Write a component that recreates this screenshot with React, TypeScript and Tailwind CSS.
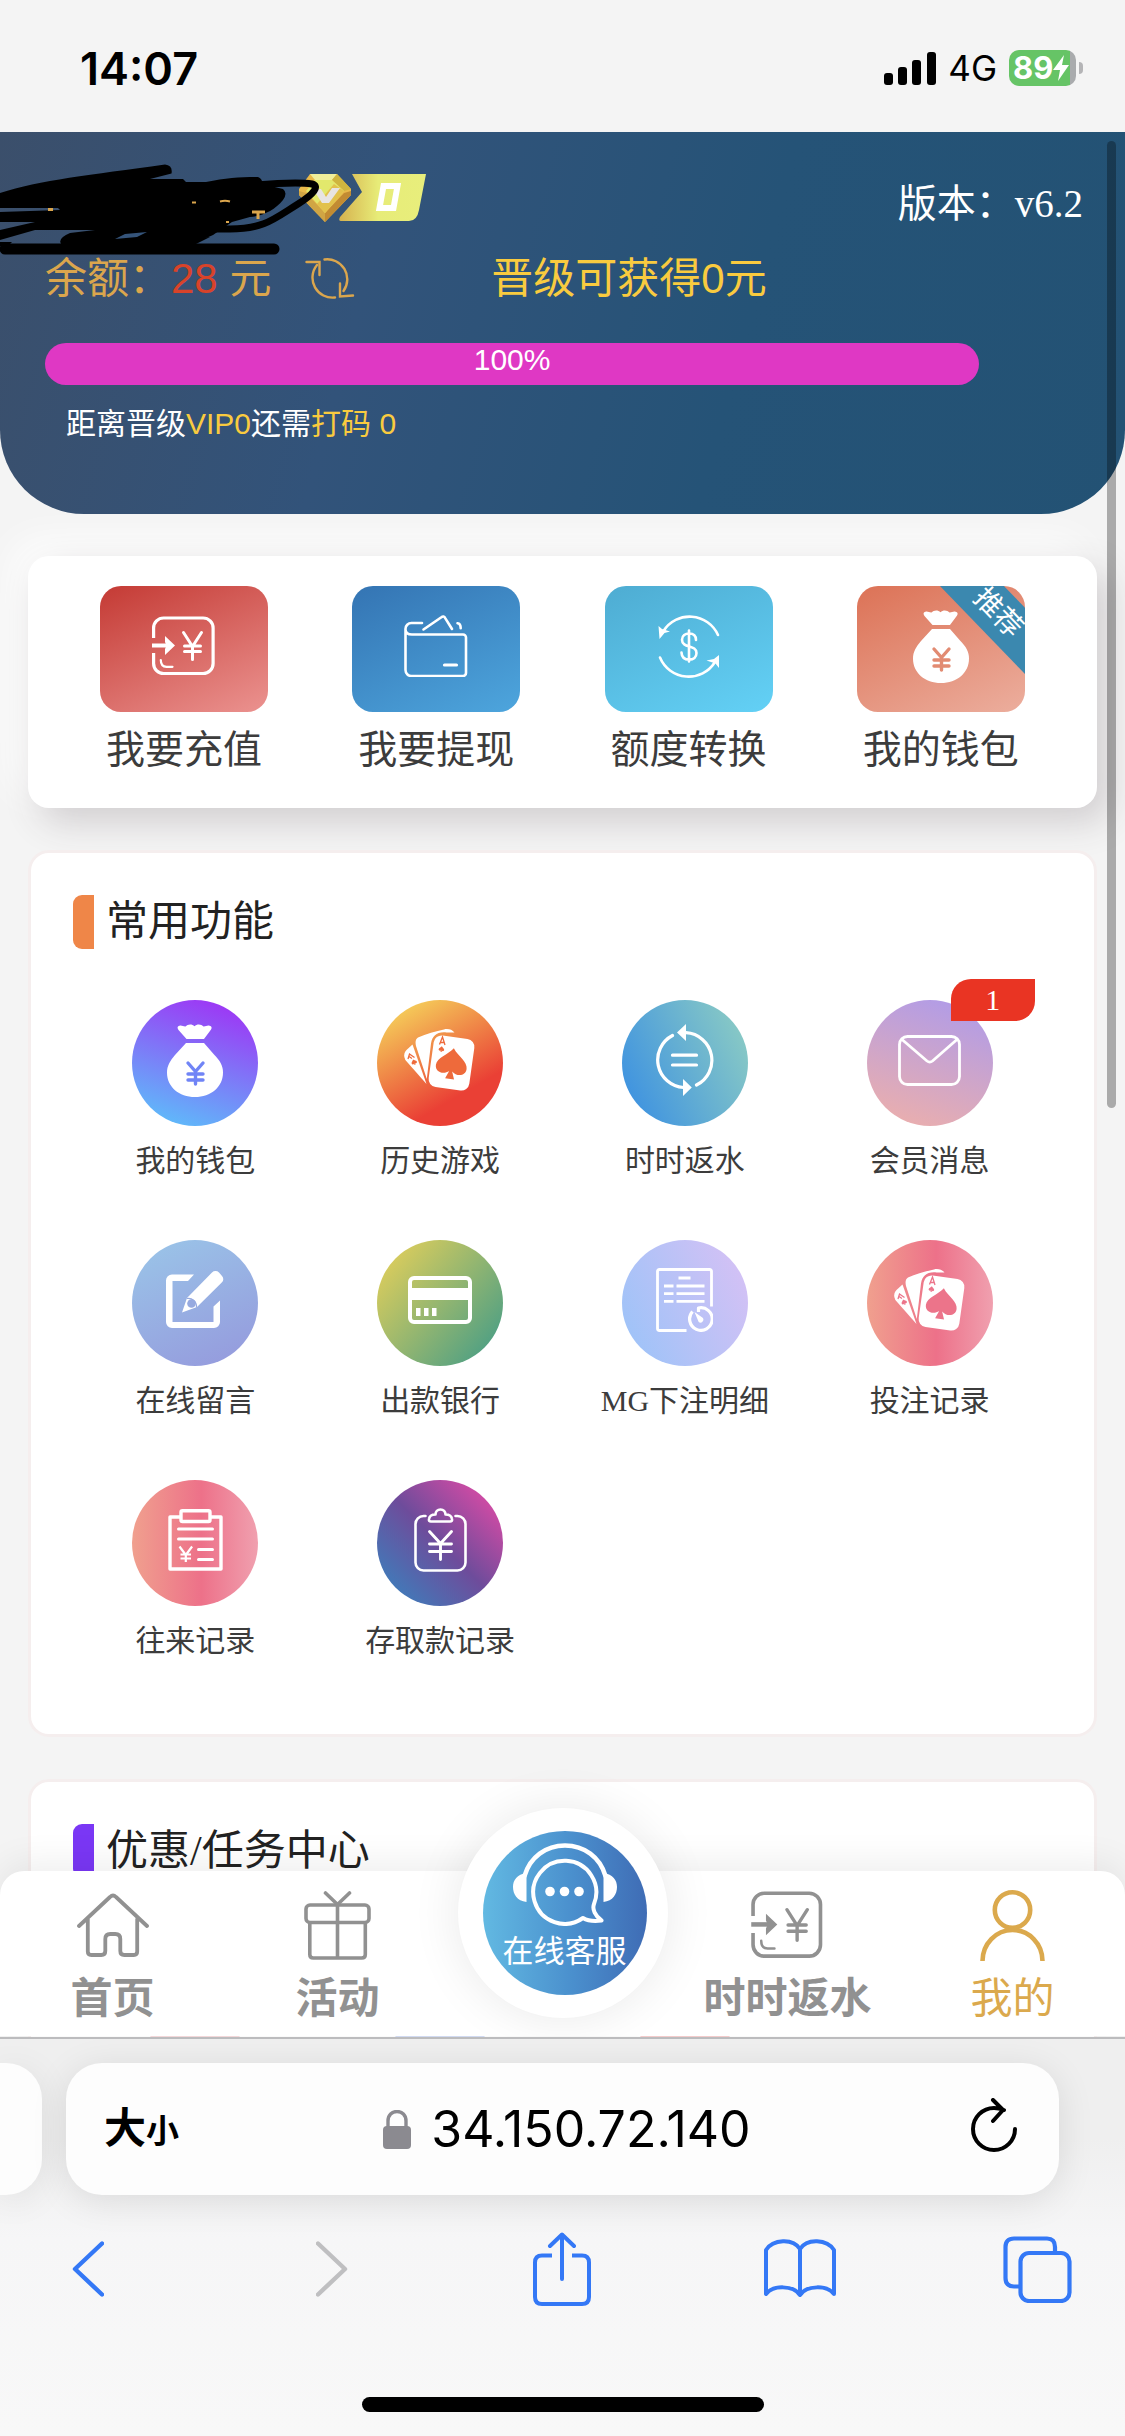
import React from "react";

type IconProps = { className?: string; cut?: string };

const line = {
  fill: "none",
  stroke: "currentColor",
  strokeLinecap: "round" as const,
  strokeLinejoin: "round" as const,
};

/* ---------- service icons ---------- */

function RechargeIcon({ className }: IconProps) {
  return (
    <svg viewBox="0 0 64 60" className={className} aria-hidden="true" {...line}>
      <path strokeWidth="3.2" strokeLinecap="butt" d="M1.6 22V12a10 10 0 0 1 10-10h39.500a10 10 0 0 1 10 10v35.500a10 10 0 0 1-10 10H11.600a10 10 0 0 1-10-10V37" />
      <path strokeWidth="4" strokeLinecap="butt" d="M0 29.500h16" />
      <path fill="currentColor" stroke="none" d="M13 20l10 9.500L13 39v-6l1.500-3.500L13 26z" />
      <path strokeWidth="3" d="M31.500 16.500l9 14 9-14M40.500 30.500v13M32.500 30h16M32.500 35.500h16" />
      <path strokeWidth="2.200" d="M8.800 44c0 4.500 2.200 6.800 5.700 6.800h6" />
    </svg>
  );
}

function WalletIcon({ className }: IconProps) {
  return (
    <svg viewBox="0 0 64 62" className={className} aria-hidden="true" strokeWidth="2.600" {...line}>
      <path d="M18 8H8a6 6 0 0 0-6.500 6.500c0 3.200 2.500 5 6.500 5h51a3 3 0 0 1 3 3v35.500a3 3 0 0 1-3 3H8a6 6 0 0 1-6.500-6V14.500" />
      <path d="M19.500 14.500L37 2.500c2-1.500 3.400-1.200 4.200.600L48 14M53.500 8.200c2.500.3 3.200 2 3.200 5" />
      <path strokeWidth="3.200" d="M40.500 50h12" />
    </svg>
  );
}

function TransferIcon({ className }: IconProps) {
  return (
    <svg viewBox="0 0 62 65" className={className} aria-hidden="true" strokeWidth="2.600" {...line}>
      <path d="M60 21A31 31 0 0 0 5.500 17M2 43.500A31 31 0 0 0 57 48" />
      <path fill="currentColor" stroke="none" d="M.500 12l3.500 3 8 2.600-5.500 1.400-5 6zM61 41v13l-3.500-4.500-9-3 7.500-1.500z" />
      <path d="M38 26c0-5-3.500-6.500-7-6.500s-7 2.200-7 6.200c0 9 14.500 4.600 14.500 13.300 0 4.300-3 6.600-7.300 6.600-4.500 0-7.500-2.500-7.700-7M31 16.500v31" />
    </svg>
  );
}

function MoneyBagIcon({ className, cut }: IconProps) {
  return (
    <svg viewBox="0 0 56 73" className={className} aria-hidden="true">
      <path fill="currentColor" d="M12.500 1.700c2.500-.5 4 1 6 .8C20.500 0 25-.5 27.500 2.200 30-.5 34.500 0 36.500 2.500c2 .2 3.500-1.300 6-.8 2.300.500 2.600 2 1.400 4L37 15H19.500L11.500 6c-1.400-2-1.300-3.800 1-4.300zM19 19h18l10 11.500c6 6 9 11.500 9 18C56 63 44 73 28 73S0 63 0 48.500C0 42 3 37 8 31z" />
      <path d="M21 39l7.500 8.500L36 39M28.500 47.500V60M21 50h15M21 56h15" fill="none" stroke={cut} strokeWidth="3.400" strokeLinecap="round" />
    </svg>
  );
}

function CardsIcon({ className, cut }: IconProps) {
  return (
    <svg viewBox="0 0 72 63" className={className} aria-hidden="true" fill="currentColor">
      <path d="M8.500 15.500L22.500 55 1.800 31.500C-.8 27 0 24 2.500 21z" />
      <path d="M14 8.500C22 5 32 2 40 .400c4-.9 8 0 10.500 3.100h-8C33 2.500 28.500 6.500 27 14.500L22.800 50 12 17c-.9-4-.5-7 2-8.500z" />
      <rect x="-20.500" y="-26" width="41" height="52" rx="8" transform="translate(47.500 34) rotate(8)" />
      <g fill={cut}>
        <path transform="translate(47.800 34) rotate(8)" d="M0-15C5-7.500 15.500-4 15.500 4c0 7.500-9 9-14 4.300L4.500 16h-9l3-7.700C-6.500 13-15.500 11.500-15.500 4c0-8 10.500-11.500 15.500-19z" />
        <path transform="translate(37.500 20) rotate(8) scale(.18)" d="M0-15C5-7.500 15.500-4 15.500 4c0 7.500-9 9-14 4.300L4.500 16h-9l3-7.700C-6.500 13-15.500 11.500-15.500 4c0-8 10.500-11.500 15.500-19z" />
        <path transform="translate(10 33) rotate(-22) scale(.18)" d="M0-15C5-7.500 15.500-4 15.500 4c0 7.500-9 9-14 4.300L4.500 16h-9l3-7.700C-6.500 13-15.500 11.500-15.500 4c0-8 10.500-11.500 15.500-19z" />
      </g>
      <g fill="none" stroke={cut} strokeWidth="1.300">
        <path d="M35.500 15.500l3-7.500 2.500 8M36.500 13.500h4" />
        <path d="M4 30l1.500-5 5 3.500M5 27.500l3 2" />
      </g>
    </svg>
  );
}

function RebateIcon({ className }: IconProps) {
  return (
    <svg viewBox="0 0 59 72" className={className} aria-hidden="true" strokeWidth="3.200" {...line}>
      <path d="M31 8.700A27.600 27.600 0 0 1 41.500 61M17.500 11.500A27.600 27.600 0 0 0 28.500 63.500" />
      <path d="M17.500 31.200h24M17.500 41h24" />
      <path fill="currentColor" stroke="none" d="M22 8.500L31 0v17zM36.800 63.500L28 55v17z" />
    </svg>
  );
}

function MailIcon({ className }: IconProps) {
  return (
    <svg viewBox="0 0 63 51" className={className} aria-hidden="true" strokeWidth="2.800" {...line}>
      <rect x="1.500" y="1.500" width="60" height="48" rx="8" />
      <path d="M4 4.500l25 21.500c2 1.600 3.500 1.600 5.500 0L59 4.500" />
    </svg>
  );
}

function EditIcon({ className, cut }: IconProps) {
  return (
    <svg viewBox="0 0 58 58" className={className} aria-hidden="true" fill="currentColor">
      <path d="M28 3.500H6a6 6 0 0 0-6 6V51a6 6 0 0 0 6 6h42a6 6 0 0 0 6-6V29.500l-6.500 6V51h-41V10H22z" />
      <path d="M46 1.500a5 5 0 0 1 7 0l3 3.500a4.500 4.500 0 0 1 0 6.300L31 36l-15 5.500 5-14.500z" />
      <path fill="none" stroke={cut} strokeWidth="1.200" d="M21 27.500c5-1 10 3.500 9.500 9" />
      <circle cx="25.500" cy="32.500" r="4.300" fill={cut} />
    </svg>
  );
}

function BankCardIcon({ className }: IconProps) {
  return (
    <svg viewBox="0 0 64 48" className={className} aria-hidden="true">
      <rect x="2" y="2" width="60" height="44" rx="4" fill="none" stroke="currentColor" strokeWidth="4" />
      <path fill="currentColor" d="M2 12h60v12H2zM8 32h4.500v8H8zM16 32h4.500v8H16zM24 32h4.500v8H24z" />
    </svg>
  );
}

function BetDetailIcon({ className }: IconProps) {
  return (
    <svg viewBox="0 0 57 64" className={className} aria-hidden="true" strokeWidth="2.800" {...line}>
      <path strokeLinecap="butt" d="M55.500 38.500V3.500q0-2-2-2h-50q-2 0-2 2v57q0 2 2 2H30.500" />
      <path strokeLinecap="butt" d="M22.500 10H34.500M8 18h9.500M20.500 18h28M8 25.700h9.500M20.500 25.700h28M8 33.400h9.500M20.500 33.400h28" />
      <path strokeLinecap="butt" strokeWidth="3.200" d="M42.500 44v-4a11.300 11.300 0 1 1-6 3.500" />
      <path fill="currentColor" stroke="none" d="M38.500 44l8.500 6a3 3 0 0 1-4.300 4z" />
    </svg>
  );
}

function LedgerIcon({ className }: IconProps) {
  return (
    <svg viewBox="0 0 55 62" className={className} aria-hidden="true" strokeWidth="3.400" {...line}>
      <path d="M12 8H2v52h51V8H43" />
      <rect x="13" y="1.800" width="29" height="10.700" rx="1.500" />
      <path d="M10.500 20h34M10.500 30h34M30.500 40.500h14M30.500 50.500h14" strokeWidth="3" />
      <path d="M11.500 37.500l6.300 8.500 6.300-8.500M17.800 46v7M12.500 45.500h10.500M12.500 49.500h10.500" strokeWidth="2.200" strokeLinecap="butt" />
    </svg>
  );
}

function DepositLogIcon({ className }: IconProps) {
  return (
    <svg viewBox="0 0 53 64" className={className} aria-hidden="true" strokeWidth="2.600" {...line}>
      <path d="M11.500 8H9.500a8 8 0 0 0-8 8v38.500a8 8 0 0 0 8 8h34a8 8 0 0 0 8-8V16a8 8 0 0 0-8-8h-2" />
      <path d="M17 13.500h19q2.500 0 2-2.500c-.5-4-3-4.500-6.500-4.500C31.500 3.500 29.500 1.500 26.500 1.500s-5 2-5 5c-3.500 0-6 .5-6.500 4.500q-.5 2.500 2 2.500z" />
      <path strokeWidth="2.900" d="M15.500 23.500l11 12 11-12M26.500 35.500v16M15.500 36h22M15.500 43.500h22" />
    </svg>
  );
}

/* ---------- tab bar icons ---------- */

function HomeIcon({ className }: IconProps) {
  return (
    <svg viewBox="0 0 72 64" className={className} aria-hidden="true" strokeWidth="3.800" {...line}>
      <path d="M2 33L33 4c2-2 4-2 6 0l31 29M10.800 26v32.500q0 3.500 3.500 3.500h10q4 0 4-4V46q0-5 5-5h5q5 0 5 5v12q0 4 4 4h9.500q3.400 0 3.400-3.500V26" />
    </svg>
  );
}

function GiftIcon({ className }: IconProps) {
  return (
    <svg viewBox="0 0 67 69" className={className} aria-hidden="true" strokeWidth="3.600" {...line}>
      <rect x="2" y="14" width="63" height="17.500" rx="4" />
      <path d="M5.800 32v31.500q0 3.500 3.500 3.500h48.500q3.500 0 3.500-3.500V32M33.500 14v52M33.500 13.500L21.500 2M33.500 13.500L45.500 2" />
    </svg>
  );
}

function UserIcon({ className }: IconProps) {
  return (
    <svg viewBox="0 0 65 71" className={className} aria-hidden="true" strokeWidth="4.600" fill="none" stroke="currentColor">
      <circle cx="32.500" cy="20" r="17.700" />
      <path d="M2.500 71a30 31 0 0 1 60 0" />
    </svg>
  );
}

function HeadsetIcon({ className }: IconProps) {
  return (
    <svg viewBox="0 0 104 84" className={className} aria-hidden="true" strokeWidth="4.500" {...line}>
      <path d="M11.500 34C17 15 33 3.500 52 3.500S87 15 92.500 34" />
      <path fill="currentColor" stroke="none" d="M13.500 31v29C4 59 0 52 0 45s4-12.500 13.500-14zM90.500 31v29C100 59 104 52 104 45s-4-12.500-13.500-14z" />
      <path strokeWidth="4" d="M70 76a31.500 31.500 0 1 1 11-14c-2 5 1 12 7.500 16.500-6 .8-13.500.5-18.500-2.500z" />
      <g fill="currentColor" stroke="none">
        <circle cx="37" cy="49.500" r="4.800" />
        <circle cx="51.500" cy="49.500" r="4.800" />
        <circle cx="66" cy="49.500" r="4.800" />
      </g>
    </svg>
  );
}

/* ---------- header drawings ---------- */

function VipBadge() {
  return (
    <svg viewBox="0 0 130 50" className="h-[50px] w-[130px]" role="img" aria-label="VIP 0">
      <defs>
        <linearGradient id="plate" x1="0" x2="1">
          <stop offset="0" stopColor="#d6b24f" />
          <stop offset=".45" stopColor="#e7ec78" />
          <stop offset="1" stopColor="#e8ee7c" />
        </linearGradient>
      </defs>
      <path fill="#e9b94a" d="M12 1h27l14 15v6L27 49 1 22v-6z" />
      <path fill="#f0ee9a" d="M12 1h27l-5 6H17z" />
      <path fill="#cfb53f" d="M39 1l14 15-7 2-12-11z" />
      <path fill="#c28b32" d="M53 18v4L27 49v-9l19-20z" />
      <path fill="#d0a544" d="M1 18v4l26 27v-9L8 20z" />
      <path fill="#e2e86c" d="M17 7h17l12 11-19 22L8 18z" />
      <path fill="#e2b13f" d="M46 18L27 40l-8-9 17-20z" opacity=".7" />
      <path fill="#e8e4e2" d="M15 16h8l5 8 6-9h8L31 30h-7z" />
      <path fill="url(#plate)" d="M54 1h74l-7 36q-2 11-10 11H43q-3 0-1-4l22-25z" />
      <path fill="none" stroke="#fff" strokeWidth="6" d="M85.500 13h14l-4 22H81.500z" />
    </svg>
  );
}

function Scribble() {
  return (
    <svg viewBox="0 0 330 100" className="absolute left-0 top-[28px] h-[100px] w-[330px]" aria-hidden="true" strokeLinecap="round" strokeLinejoin="round">
      <path d="M0 33C40 20 90 15 165 4.500q8 1 6.500 9L150 19h33l3 3h20c20-4 34-5 52-5q5 2 4 7l21 5q5 4 0 11c-8 10-20 16-33 17l-18 5-19 13c-13 7-53 9-93 10H62q-6-6 8-12l25-3H35L0 80V70l35-8H0V52l60-2-2-2H0z" />
      <path fill="none" stroke="#000" strokeWidth="7" d="M255 25c25-2 45-3 57-1 8 2 2 10-14 20-24 15-34 25-68 25h-40" />
      <path fill="none" stroke="#000" strokeWidth="11" d="M5 89h269" />
      <path fill="#000" d="M0 82h12l-4 4H0zM110 83l100-6-20 10h-80z" />
      <g fill="none" stroke="#dba64d" strokeLinecap="butt">
        <path strokeWidth="3" d="M48 49.500h5M252 52h13M258 52v7" />
        <path strokeWidth="2" d="M192 42.500h4M220 41.500q5-1.500 10 0M226 62h3" />
      </g>
      <path fill="#35547a" d="M115 79l10-5 22-2-10 5z" />
    </svg>
  );
}

function RefreshIcon() {
  return (
    <svg viewBox="0 0 50 43" className="h-[43px] w-[50px]" aria-hidden="true" strokeWidth="2.400" {...line}>
      <path d="M19.500 1.500A20 20 0 0 1 38.500 33M30 39.500A20 20 0 0 1 12 7" />
      <path strokeLinejoin="miter" d="M1.500 4H14.500v13M35 25.500V38.500l13-1" />
    </svg>
  );
}

/* ---------- data ---------- */

const shortcuts = [
  { label: "我要充值", bg: "bg-[linear-gradient(155deg,#c43a34_0%,#e98e8b_95%)]", icon: <RechargeIcon className="h-[60px] w-[64px]" /> },
  { label: "我要提现", bg: "bg-[linear-gradient(155deg,#3474b3_0%,#4ca3db_95%)]", icon: <WalletIcon className="h-[62px] w-[64px]" /> },
  { label: "额度转换", bg: "bg-[linear-gradient(155deg,#4eacd2_0%,#62cff4_95%)]", icon: <TransferIcon className="h-[65px] w-[62px]" /> },
  { label: "我的钱包", bg: "bg-[linear-gradient(155deg,#dc7256_0%,#ebab9a_95%)]", icon: <MoneyBagIcon cut="#e28b72" className="h-[73px] w-[56px]" />, ribbon: "推荐" },
];

const features = [
  { label: "我的钱包", bg: "bg-[linear-gradient(200deg,#9b3bf5_12%,#5cc0fa_95%)]", icon: <MoneyBagIcon cut="#7084f6" className="h-[73px] w-[56px]" /> },
  { label: "历史游戏", bg: "bg-[linear-gradient(150deg,#f5cf5a_10%,#ea4035_72%)]", icon: <CardsIcon cut="#ee6a3b" className="h-[63px] w-[72px]" /> },
  { label: "时时返水", bg: "bg-[linear-gradient(65deg,#3f93e0_10%,#88c9c5_90%)]", icon: <RebateIcon className="h-[72px] w-[59px]" /> },
  { label: "会员消息", bg: "bg-[linear-gradient(200deg,#b29ce6_10%,#ecafac_95%)]", icon: <MailIcon className="h-[51px] w-[63px]" />, badge: 1 },
  { label: "在线留言", bg: "bg-[linear-gradient(155deg,#9ac4e8_5%,#959add_95%)]", icon: <EditIcon cut="#97aae0" className="h-[58px] w-[58px]" /> },
  { label: "出款银行", bg: "bg-[linear-gradient(130deg,#dccd5c_10%,#4d9f84_90%)]", icon: <BankCardIcon className="h-[48px] w-[64px]" /> },
  { label: "MG下注明细", bg: "bg-[linear-gradient(65deg,#9fc3f8_10%,#d3c1f5_90%)]", icon: <BetDetailIcon className="h-[64px] w-[57px]" /> },
  { label: "投注记录", bg: "bg-[linear-gradient(90deg,#f0a08e_0%,#ed7189_55%,#f0a0af_100%)]", icon: <CardsIcon cut="#ec748a" className="h-[63px] w-[72px]" /> },
  { label: "往来记录", bg: "bg-[linear-gradient(90deg,#f0a08e_0%,#ed7189_55%,#f0a0af_100%)]", icon: <LedgerIcon className="h-[62px] w-[55px]" /> },
  { label: "存取款记录", bg: "bg-[linear-gradient(45deg,#417ab9_12%,#6e4c9b_50%,#cb4ba4_85%)]", icon: <DepositLogIcon className="h-[64px] w-[53px]" /> },
];

const promoTints = ["bg-[#f8dcde]", "bg-[#d6dff6]", "bg-[#f8d0d0]"];

/* ---------- page parts ---------- */

function StatusBar() {
  return (
    <header className="flex h-[132px] shrink-0 items-center justify-between pb-2 pl-[80px] pr-[42px] pt-3 font-['Inter',sans-serif] text-black">
      <time className="text-[45px] font-semibold leading-none">14:07</time>
      <div className="flex items-center gap-[12px]">
        <svg viewBox="0 0 52 33" className="h-[33px] w-[52px]" role="img" aria-label="信号">
          <rect x="0" y="21" width="9" height="12" rx="3" />
          <rect x="14" y="15" width="9" height="18" rx="3" />
          <rect x="28" y="8" width="9" height="25" rx="3" />
          <rect x="43" y="0" width="9" height="33" rx="3" />
        </svg>
        <span className="text-[35px] leading-[42px]">4G</span>
        <div className="flex items-center gap-[3px]">
          <div className="flex h-[36px] w-[67px] items-center rounded-[10px] bg-[linear-gradient(90deg,#66c466_91%,#a9abad_91%)] pl-1 text-white">
            <span className="text-[31px] font-bold leading-[36px]">89</span>
            <svg viewBox="0 0 16 26" className="h-[26px] w-[16px] shrink-0" fill="currentColor" aria-hidden="true">
              <path d="M11 0L0 15h7L5 26 16 10H9z" />
            </svg>
          </div>
          <span className="h-3 w-1 rounded-r-full bg-[#b4b4b6]" />
        </div>
      </div>
    </header>
  );
}

function AccountPanel() {
  return (
    <section className="relative rounded-b-[84px] bg-[linear-gradient(105deg,#3b4f6b_0%,#32537a_33%,#255377_65%,#235274_100%)] pb-[68px] pl-[45px] pr-[42px] pt-[36px] font-['Liberation_Sans','Noto_Sans_CJK_SC',sans-serif]">
      <div className="flex h-[72px] items-center justify-between">
        <div className="ml-[253px] pb-3">
          <VipBadge />
        </div>
        <span className="font-['Liberation_Serif','Noto_Sans_CJK_SC',serif] text-[39px] leading-[58px] text-white">版本：v6.2</span>
      </div>
      <div className="flex h-[78px] items-center text-[42px] leading-[60px]">
        <div className="flex basis-[43%] items-center text-[#dba64d]">
          <span>余额：</span>
          <span className="text-[#d8432a]">28</span>
          <span>&nbsp;元</span>
          <button type="button" aria-label="刷新余额" className="ml-[34px]">
            <RefreshIcon />
          </button>
        </div>
        <span className="text-[#f9cb3f]">晋级可获得0元</span>
      </div>
      <div role="progressbar" aria-label="晋级进度" aria-valuenow={100} aria-valuemin={0} aria-valuemax={100} className="mt-[25px] h-[42px] w-[90%] rounded-full bg-[#df38c4] text-center text-[30px] leading-[34px] text-white">
        100%
      </div>
      <p className="mt-[16px] pl-[21px] text-[30px] leading-[45px] text-white">
        距离晋级<span className="text-[#f9cb3f]">VIP0</span>还需<span className="text-[#f9cb3f]">打码 0</span>
      </p>
      <Scribble />
    </section>
  );
}

function Shortcuts() {
  return (
    <nav aria-label="快捷操作" className="mx-[28px] mt-[42px] grid grid-cols-4 rounded-[21px] bg-white px-[30px] pb-[29px] pt-[30px] shadow-[12px_14px_36px_#d0cdcf,-14px_-14px_40px_#ffffff]">
      {shortcuts.map((s) => (
        <a key={s.label} href="#" className="flex flex-col items-center gap-[9px]">
          <span className={`relative flex h-[126px] w-[168px] items-center justify-center overflow-hidden rounded-[21px] pb-[6px] text-white ${s.bg}`}>
            {s.icon}
            {s.ribbon && (
              <span className="absolute right-[-53px] top-[4px] w-[160px] rotate-[46deg] bg-[#3b88af] text-center text-[28px] leading-[46px]">{s.ribbon}</span>
            )}
          </span>
          <span className="text-[39px] leading-[58px] text-[#3c3c3c]">{s.label}</span>
        </a>
      ))}
    </nav>
  );
}

function Panel({ title, accent, children }: { title: string; accent: string; children: React.ReactNode }) {
  return (
    <section className="mx-[28px] mt-[42px] rounded-[21px] border-[3px] border-[#f5eeee] bg-white px-[42px] pb-[14px] pt-[42px]">
      <h2 className="flex h-[54px] items-center gap-[12px] text-[42px] leading-[54px] text-[#222222]">
        <span className={`h-[54px] w-[21px] rounded-l-[9px] ${accent}`} />
        {title}
      </h2>
      <div className="mt-[51px] grid grid-cols-4">{children}</div>
    </section>
  );
}

function TabItem({ label, icon, active }: { label: string; icon: React.ReactNode; active?: boolean }) {
  return (
    <a href="#" aria-current={active ? "page" : undefined} className={active ? "flex flex-col items-center text-[#dba94d]" : "flex flex-col items-center font-bold text-[#919191]"}>
      <span className="flex h-[72px] items-center">{icon}</span>
      <span className="mt-[4px] whitespace-nowrap text-[42px] leading-[60px]">{label}</span>
    </a>
  );
}

function TabBar() {
  return (
    <nav aria-label="主导航" className="absolute inset-x-0 bottom-[1px] grid h-[165px] grid-cols-5 rounded-t-[24px] bg-white pt-[18px] font-['Noto_Sans_CJK_SC',sans-serif] shadow-[0_-8px_36px_rgba(0,0,0,0.07)]">
      <TabItem label="首页" icon={<HomeIcon className="h-[64px] w-[72px]" />} />
      <TabItem label="活动" icon={<GiftIcon className="h-[69px] w-[67px]" />} />
      <div className="relative">
        <a href="#" className="absolute left-1/2 top-[-81px] flex h-[210px] w-[210px] -translate-x-1/2 items-center justify-center rounded-full bg-white pl-1 shadow-[0_0_50px_rgba(0,0,0,0.09)]">
          <span className="flex h-[164px] w-[164px] flex-col items-center rounded-full bg-[linear-gradient(90deg,#62b9e2_0%,#4a8fcd_55%,#3f6cb5_100%)] pt-[11px] text-white">
            <HeadsetIcon className="h-[84px] w-[104px]" />
            <span className="whitespace-nowrap text-[31px] leading-[46px]">在线客服</span>
          </span>
        </a>
      </div>
      <TabItem label="时时返水" icon={<RechargeIcon className="h-[68px] w-[73px]" />} />
      <TabItem label="我的" icon={<UserIcon className="h-[71px] w-[65px]" />} active />
    </nav>
  );
}

function BrowserBar() {
  return (
    <footer className="flex shrink-0 flex-col overflow-hidden border-t-2 border-[#bcbcbe] bg-[linear-gradient(180deg,#efefef_0%,#efefef_25%,#f6f6f7_50%,#f8f8f8_100%)] font-['Inter','Noto_Sans_CJK_SC',sans-serif]">
      <div className="flex pt-[24px]">
        <div className="h-[132px] w-[42px] rounded-r-[36px] bg-[#fdfdfd] shadow-[0_6px_36px_rgba(0,0,0,0.08)]" />
        <div className="ml-[24px] mr-[66px] flex h-[132px] flex-1 items-center justify-between rounded-[36px] bg-[#fdfdfd] pl-[38px] pr-[42px] shadow-[0_6px_36px_rgba(0,0,0,0.1)]">
          <button type="button" className="flex items-baseline font-bold leading-[60px] text-black">
            <span className="text-[42px]">大</span>
            <span className="text-[33px]">小</span>
          </button>
          <div className="mr-[16px] flex items-center gap-[20px]">
            <svg viewBox="0 0 28 39" className="h-[39px] w-[28px]" aria-hidden="true">
              <rect y="16" width="28" height="23" rx="4" fill="#8b8a90" />
              <path d="M5 18v-7C5 5 9 1.500 14 1.500S23 5 23 11v7" fill="none" stroke="#8b8a90" strokeWidth="3.400" />
            </svg>
            <span className="text-[50px] leading-[60px] text-black">34.150.72.140</span>
          </div>
          <button type="button" aria-label="重新载入" className="pb-2">
            <svg viewBox="0 0 46 54" className="h-[54px] w-[46px] text-black" aria-hidden="true" strokeWidth="4" {...line}>
              <path d="M33 12C29 10.500 26 10 23 10A21 21 0 1 0 44 31M22 2l10 10-10 11" />
            </svg>
          </button>
        </div>
      </div>
      <div className="-mx-[31px] mt-[37px] grid h-[74px] grid-cols-5 place-items-center text-[#3478f6]">
        <button type="button" aria-label="后退">
          <svg viewBox="0 0 32 56" className="h-[56px] w-[32px]" aria-hidden="true" strokeWidth="4.400" {...line}>
            <path d="M30 2.500L3 28l27 25.500" />
          </svg>
        </button>
        <button type="button" aria-label="前进" className="ml-[14px] text-[#bfbfc1]">
          <svg viewBox="0 0 32 56" className="h-[56px] w-[32px]" aria-hidden="true" strokeWidth="4.400" {...line}>
            <path d="M2 2.500L29 28 2 53.500" />
          </svg>
        </button>
        <button type="button" aria-label="分享">
          <svg viewBox="0 0 58 74" className="h-[74px] w-[58px]" aria-hidden="true" strokeWidth="4" {...line}>
            <path d="M19 23.500H9q-7 0-7 7V65q0 7 7 7h40q7 0 7-7V30.500q0-7-7-7H39" strokeLinecap="butt" />
            <path d="M29 47V4M17 14L29 2.500 41 14" />
          </svg>
        </button>
        <button type="button" aria-label="书签">
          <svg viewBox="0 0 72 60" className="h-[60px] w-[72px]" aria-hidden="true" strokeWidth="4" {...line}>
            <path d="M2 55V11C9 0 29-1 36 10 43-1 63 0 70 11v44C63 46 43 46 36 56 29 46 9 46 2 55zM36 10v46" />
          </svg>
        </button>
        <button type="button" aria-label="标签页">
          <svg viewBox="0 0 69 67" className="h-[67px] w-[69px]" aria-hidden="true" strokeWidth="4.200" {...line}>
            <path strokeLinecap="butt" d="M17 50.500H11q-8.500 0-8.500-8.500V11q0-8.500 8.500-8.500h33q8 0 8 8.500v5" />
            <rect x="17.500" y="17" width="49" height="48" rx="8.500" />
          </svg>
        </button>
      </div>
      <div className="mx-auto mb-[24px] mt-[91px] h-[15px] w-[402px] rounded-full bg-black" />
    </footer>
  );
}

export default function App() {
  return (
    <div className="flex h-screen flex-col bg-[#f4f4f4]">
      <StatusBar />
      <div className="relative min-h-0 flex-1 overflow-hidden">
        <main className="h-full overflow-hidden font-['Liberation_Serif','Noto_Sans_CJK_SC',serif]">
          <AccountPanel />
          <Shortcuts />
          <Panel title="常用功能" accent="bg-[#ef8648]">
            {features.map((f) => (
              <a key={f.label} href="#" className="flex h-[240px] flex-col items-center gap-[12px]">
                <span className={`relative flex h-[126px] w-[126px] items-center justify-center rounded-full pb-[6px] text-white ${f.bg}`}>
                  {f.icon}
                  {f.badge && (
                    <span className="absolute left-[84px] top-[-21px] h-[42px] w-[84px] rounded-br-[20px] rounded-tl-[20px] bg-[#e93423] text-center text-[30px] leading-[42px]">{f.badge}</span>
                  )}
                </span>
                <span className="whitespace-nowrap text-[30px] leading-[45px] text-[#3c3c3c]">{f.label}</span>
              </a>
            ))}
          </Panel>
          <Panel title="优惠/任务中心" accent="bg-[#7a37f5]">
            {promoTints.map((tint) => (
              <span key={tint} className={`mx-auto h-[126px] w-[126px] rounded-full ${tint}`} />
            ))}
          </Panel>
        </main>
        <TabBar />
        <div aria-hidden="true" className="absolute right-[9px] top-[9px] h-[967px] w-[9px] rounded-full bg-black/30" />
      </div>
      <BrowserBar />
    </div>
  );
}
